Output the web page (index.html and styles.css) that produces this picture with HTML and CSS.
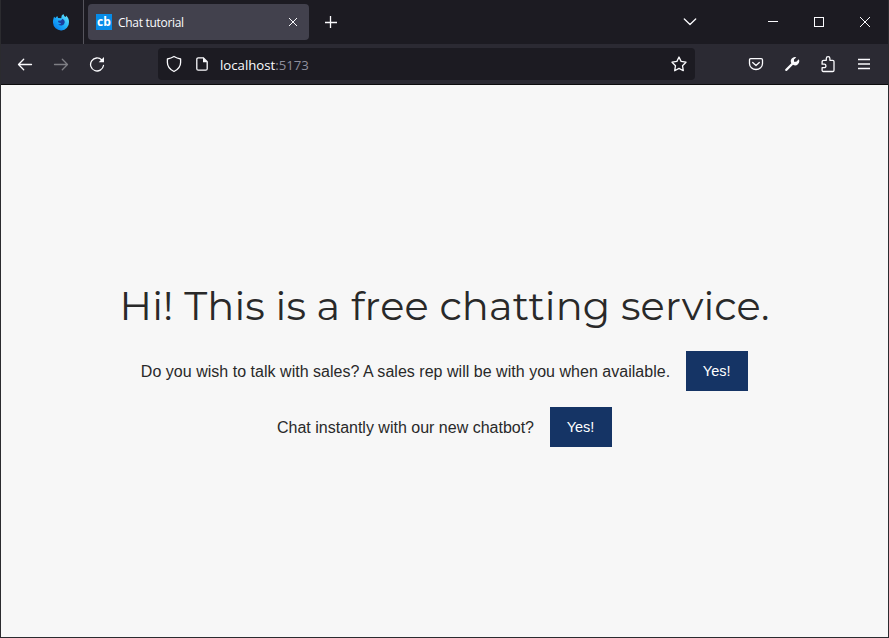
FILE: index.html
```html
<!DOCTYPE html>
<html lang="en">
<head>
<meta charset="utf-8">
<title>Chat tutorial</title>
<link rel="stylesheet" href="styles.css">
</head>
<body>
<div class="window">
  <header class="tabs">
    <div class="pinned">
      <svg width="18" height="18" viewBox="0 0 18 18">
        <defs><linearGradient id="fox" x1="1" y1="0" x2="0" y2="1"><stop offset="0" stop-color="#72f0ff"/><stop offset=".55" stop-color="#18a8fa"/><stop offset="1" stop-color="#0070e8"/></linearGradient></defs>
        <path fill="url(#fox)" d="M1.300 6.200 2 3.700l1.400 1.400L5.200 3l.9 2 3.200.2.3-2.500L11.300 1l1.100 2.200 1.600.9.1-1.500c2 1.800 3 4 2.900 6.400a8 8 0 0 1-16 .8c-.1-1.300-.1-2.500.3-3.600z"/>
        <path fill="#1a3fa0" d="M5.800 7.700 9 7.400l1.400-1.600c1.500.8 2.500 2.100 2.300 3.800a3.600 3.600 0 0 1-6.500 1.400L8 11.300l1.200-1.100-2.700-.8z"/>
      </svg>
    </div>
    <div class="tab">
      <span class="favicon">cb</span>
      <span class="tab-title">Chat tutorial</span>
      <svg width="10" height="10" viewBox="0 0 10 10"><path class="thin" d="m1 1 8 8m0-8L1 9"/></svg>
    </div>
    <svg class="new-tab" width="12" height="12" viewBox="0 0 12 12"><path class="line" d="M5.500 0v12M0 6.500h12"/></svg>
    <div class="window-controls">
      <svg class="all-tabs" width="14" height="8" viewBox="0 0 14 8"><path class="line" d="m1.300 1 5.700 5.500L12.700 1"/></svg>
      <svg width="10" height="12" viewBox="0 0 10 12"><path class="pixel" d="M0 5.500h10"/></svg>
      <svg width="10" height="10" viewBox="0 0 10 10"><path class="pixel" d="M.5.5h9v9h-9z"/></svg>
      <svg width="10" height="10" viewBox="0 0 10 10"><path class="thin" d="m0 0 10 10m0-10L0 10"/></svg>
    </div>
  </header>
  <nav class="toolbar">
    <div class="navigation">
      <svg width="16" height="16" viewBox="0 0 16 16"><path class="line" d="M14.500 8.500H2M6.700 3.300 1.500 8.500l5.200 5.200"/></svg>
      <svg class="disabled" width="16" height="16" viewBox="0 0 16 16"><path class="line" d="M1.500 8.500H14M9.300 3.300l5.200 5.200-5.200 5.200"/></svg>
      <svg width="16" height="16" viewBox="0 0 16 16"><path class="line" d="M12.800 4A6.500 6.500 0 1 0 14.500 9.500"/><path class="fill" d="M15 1v5.300H9.700z"/></svg>
    </div>
    <div class="address">
      <svg width="16" height="18" viewBox="0 0 16 18"><path class="line" d="M8 1.500c2 1.200 4.100 2 6.600 2.500v3.500c0 3.800-2.200 6.800-6.600 9-4.400-2.200-6.600-5.200-6.600-9V4C3.900 3.500 6 2.700 8 1.500z"/></svg>
      <svg width="12" height="14" viewBox="0 0 12 14"><path class="line" d="M7.200.8H2.300Q.8.8.8 2.300v9.400q0 1.500 1.500 1.500h7.400q1.500 0 1.500-1.500V4.800z"/><path class="fill" d="M7 .5v4.700h4.500z"/></svg>
      <span class="url">localhost<span class="port">:5173</span></span>
      <svg class="star" width="16" height="16" viewBox="0 0 16 16"><path class="line" d="m8 1 2.100 4.400 4.900.8-3.500 3.500.8 5L8 12.400l-4.300 2.300.8-5L1 6.200l4.900-.8z"/></svg>
    </div>
    <div class="tools">
      <svg width="16" height="16" viewBox="0 0 16 16"><path class="line" d="M2.800 2.600h10.400q1.300 0 1.300 1.300v3.600a6.500 6 0 0 1-13 0V3.900q0-1.300 1.300-1.300z"/><path class="line" d="M4.700 6.500 8 9.500l3.300-3"/></svg>
      <svg width="16" height="16" viewBox="0 0 16 16"><path class="fill" d="m1.300 13.200 6-6A4.200 4.200 0 0 1 12.300 1.200L10 3.500v2.300h2.300L14.800 3.300A4.200 4.200 0 0 1 9 8.800l-6 6q-.9.500-1.500-.1-.6-.7-.2-1.500z"/></svg>
      <svg width="16" height="18" viewBox="0 0 16 18"><path class="line" d="M3.700 5.300h2.600V3.500a1.800 1.800 0 0 1 3.600 0v1.800h2.800q1.300 0 1.300 1.300v8.600q0 1.300-1.300 1.300H3.300q-1.200 0-1.200-1.300v-2.500h2.100a1.700 1.700 0 0 0 0-3.500H2.100V6.900q0-1.600 1.600-1.600z"/></svg>
      <svg class="menu" width="12" height="12" viewBox="0 0 12 12"><path class="menu-line" d="M0 1.500h12M0 6h12M0 10.500h12"/></svg>
    </div>
  </nav>
  <main class="page">
    <h1>Hi! This is a free chatting service.</h1>
    <div class="choice sales"><span>Do you wish to talk with sales? A sales rep will be with you when available.</span><button>Yes!</button></div>
    <div class="choice"><span>Chat instantly with our new chatbot?</span><button>Yes!</button></div>
  </main>
</div>
</body>
</html>
```
FILE: styles.css
```css
* { box-sizing: border-box; }
body { margin: 0; }
.window {
  display: flex;
  flex-direction: column;
  height: 638px;
  border: solid #2b2b2f;
  border-width: 0 1px 1px;
  background: #f7f7f7;
  font-family: "Liberation Sans", sans-serif;
}
svg { display: block; flex: none; }
.line, .thin, .pixel, .menu-line { fill: none; stroke: #fbfbfe; }
.line { stroke-width: 1.3; stroke-linejoin: round; stroke-linecap: round; }
.thin { stroke-width: 1; }
.pixel { stroke-width: 1; shape-rendering: crispEdges; }
.menu-line { stroke-width: 1.3; }
.fill { fill: #fbfbfe; }
.tabs {
  display: flex;
  align-items: center;
  height: 44px;
  background: #1c1b22;
}
.pinned {
  display: flex;
  align-items: center;
  width: 83px;
  height: 44px;
  padding-left: 51px;
  border-right: 1px solid #55545c;
}
.tab {
  display: flex;
  align-items: center;
  width: 221px;
  height: 36px;
  margin-left: 4px;
  padding: 0 11px 0 8px;
  border-radius: 4px;
  background: #42414d;
  color: #fbfbfe;
}
.favicon {
  width: 16px;
  height: 16px;
  background: #078ce8;
  color: #fff;
  font: bold 12px/15px "Open Sans", sans-serif;
  text-align: center;
}
.tab-title {
  flex: 1;
  margin-left: 6px;
  padding-top: 2px;
  font: 12px/18px "Open Sans", sans-serif;
  letter-spacing: -0.3px;
}
.new-tab { margin-left: 16px; }
.window-controls {
  display: flex;
  align-items: center;
  gap: 36px;
  margin-left: auto;
  padding-right: 18px;
}
.all-tabs { margin-right: 35px; }
.toolbar {
  display: flex;
  align-items: center;
  height: 41px;
  border-bottom: 1px solid #0c0c0d;
  background: #2b2a33;
}
.navigation {
  display: flex;
  gap: 20px;
  width: 157px;
  padding-left: 16px;
}
.disabled { opacity: .4; }
.address {
  display: flex;
  align-items: center;
  width: 537px;
  height: 32px;
  padding: 0 8px;
  border-radius: 4px;
  background: #1c1b22;
}
.address svg + svg { margin-left: 14px; }
.url {
  margin-left: 12px;
  padding-top: 2px;
  color: #fbfbfe;
  font: 13.2px/20px "Open Sans", sans-serif;
}
.port { color: #8f8f9d; }
.star { margin-left: auto; }
.tools {
  display: flex;
  align-items: center;
  gap: 20px;
  margin-left: auto;
  padding-right: 18px;
}
.menu { margin-left: 2px; }
.page {
  flex: 1;
  display: flex;
  flex-direction: column;
  align-items: center;
  justify-content: center;
  gap: 16px;
  color: #292929;
}
h1 {
  margin: 0;
  padding-top: 2px;
  font: 400 40px/58px Montserrat, Inter, sans-serif;
  letter-spacing: 0.12px;
  white-space: nowrap;
}
.choice {
  display: flex;
  align-items: center;
  gap: 16px;
  font-size: 16px;
}
.choice span { padding-top: 2px; }
.sales { letter-spacing: 0.026px; }
button {
  width: 62px;
  height: 40px;
  padding: 0 1px 0 0;
  border: 0;
  background: #153465;
  color: #fff;
  font: 14.5px "Liberation Sans", sans-serif;
}
```
